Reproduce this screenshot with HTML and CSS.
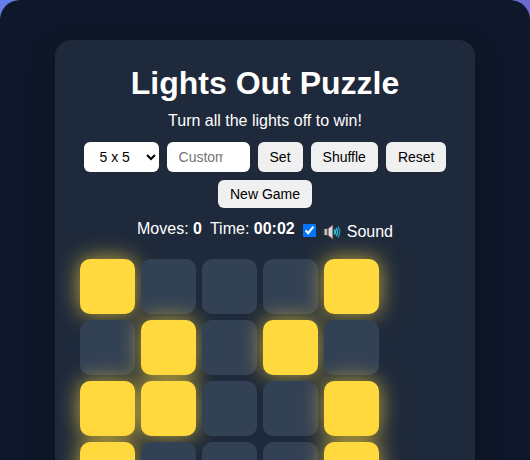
FILE: index.html
```html
<!DOCTYPE html>
<html lang="en">
<head>
<meta charset="utf-8">
<title>Lights Out Puzzle</title>
<link rel="stylesheet" href="styles.css">
</head>
<body>
<div class="shell">
  <main class="card">
    <h1 class="title">Lights Out Puzzle</h1>
    <p class="subtitle">Turn all the lights off to win!</p>
    <div class="controls">
      <select class="field select"><option>5 x 5</option></select>
      <input class="field input" type="text" placeholder="Custom">
      <button class="btn">Set</button>
      <button class="btn">Shuffle</button>
      <button class="btn">Reset</button>
      <button class="btn btn-short">New Game</button>
    </div>
    <div class="status">
      <span>Moves: <b>0</b></span>
      <span>Time: <b>00:02</b></span>
      <label class="sound">
        <input class="check" type="checkbox" checked>
        <svg class="speaker" viewBox="0 0 18 16" width="18" height="16" aria-hidden="true">
          <path d="M1 4.500h4v7H1z" fill="#bdbdbd" stroke="#3c3c3c"/>
          <path d="M5 4.500l5-4v15l-5-4z" fill="#d8d8d8" stroke="#3c3c3c"/>
          <path d="M11.500 5.500c.9 1.600.9 3.400 0 5" fill="none" stroke="#3fd0ee" stroke-width="1.600"/>
          <path d="M13.200 3.800c1.600 2.600 1.600 5.800 0 8.400" fill="none" stroke="#2cb4d8" stroke-width="1.600"/>
          <path d="M15 2.500c2 3.300 2 7.700 0 11" fill="none" stroke="#1f8fb0" stroke-width="1.500"/>
        </svg>
        <span>Sound</span>
      </label>
    </div>
    <div class="grid">
      <div class="cell on"></div><div class="cell"></div><div class="cell"></div><div class="cell"></div><div class="cell on"></div>
      <div class="cell"></div><div class="cell on"></div><div class="cell"></div><div class="cell on"></div><div class="cell"></div>
      <div class="cell on"></div><div class="cell on"></div><div class="cell"></div><div class="cell"></div><div class="cell on"></div>
      <div class="cell on"></div><div class="cell"></div><div class="cell"></div><div class="cell"></div><div class="cell on"></div>
      <div class="cell"></div><div class="cell"></div><div class="cell"></div><div class="cell"></div><div class="cell"></div>
    </div>
  </main>
</div>
</body>
</html>
```
FILE: styles.css
```css
html, body {
  margin: 0;
  height: 460px;
  overflow: hidden;
}
body {
  background: linear-gradient(135deg, #667eea, #764ba2) 0 0 / 100% 1000px no-repeat;
  font-family: "Liberation Sans", Arial, sans-serif;
  color: #fff;
}
.shell {
  background: #0f172a;
  border-radius: 20px;
  padding: 40px 55px;
  min-height: 700px;
}
.card {
  background: #1e293b;
  border-radius: 16px;
  padding: 25px;
  box-shadow: 0 10px 30px rgba(0, 0, 0, 0.3);
  text-align: center;
}
.title {
  margin: 0;
  font-size: 32px;
  line-height: 37px;
  font-weight: 700;
}
.subtitle {
  margin: 10px 0 12px;
  font-size: 16px;
  line-height: 18px;
}
.controls {
  display: flex;
  flex-wrap: wrap;
  justify-content: center;
  gap: 8px;
}
.field {
  box-sizing: border-box;
  height: 30px;
  border: 0;
  border-radius: 6px;
  background: #fff;
  color: #000;
  font: 14px "Liberation Sans", Arial, sans-serif;
}
.select {
  width: 75px;
  padding: 0 8px 0 12px;
}
.input {
  width: 83px;
  padding: 0 27px 0 12px;
}
.btn {
  height: 30px;
  padding: 0 12px;
  border: 0;
  border-radius: 6px;
  background: #f0f0f0;
  color: #000;
  font: 14px "Liberation Sans", Arial, sans-serif;
}
.btn-short {
  height: 28px;
}
.status {
  display: flex;
  justify-content: center;
  align-items: flex-start;
  gap: 8px;
  margin-top: 9px;
  font-size: 16px;
  line-height: 24px;
}
.sound {
  display: flex;
  align-items: center;
  gap: 6px;
  margin-top: 3px;
}
.check {
  width: 13px;
  height: 13px;
  margin: -3px 1px 0 0;
}
.speaker {
  display: block;
  margin-top: -1px;
}
.grid {
  display: grid;
  grid-template-columns: repeat(5, 55px);
  grid-auto-rows: 55px;
  gap: 6px;
  margin-top: 15px;
}
.cell {
  background: #334155;
  border-radius: 10px;
}
.cell.on {
  background: #ffd93d;
  box-shadow: 0 0 22px rgba(255, 217, 61, 0.75);
}
```
